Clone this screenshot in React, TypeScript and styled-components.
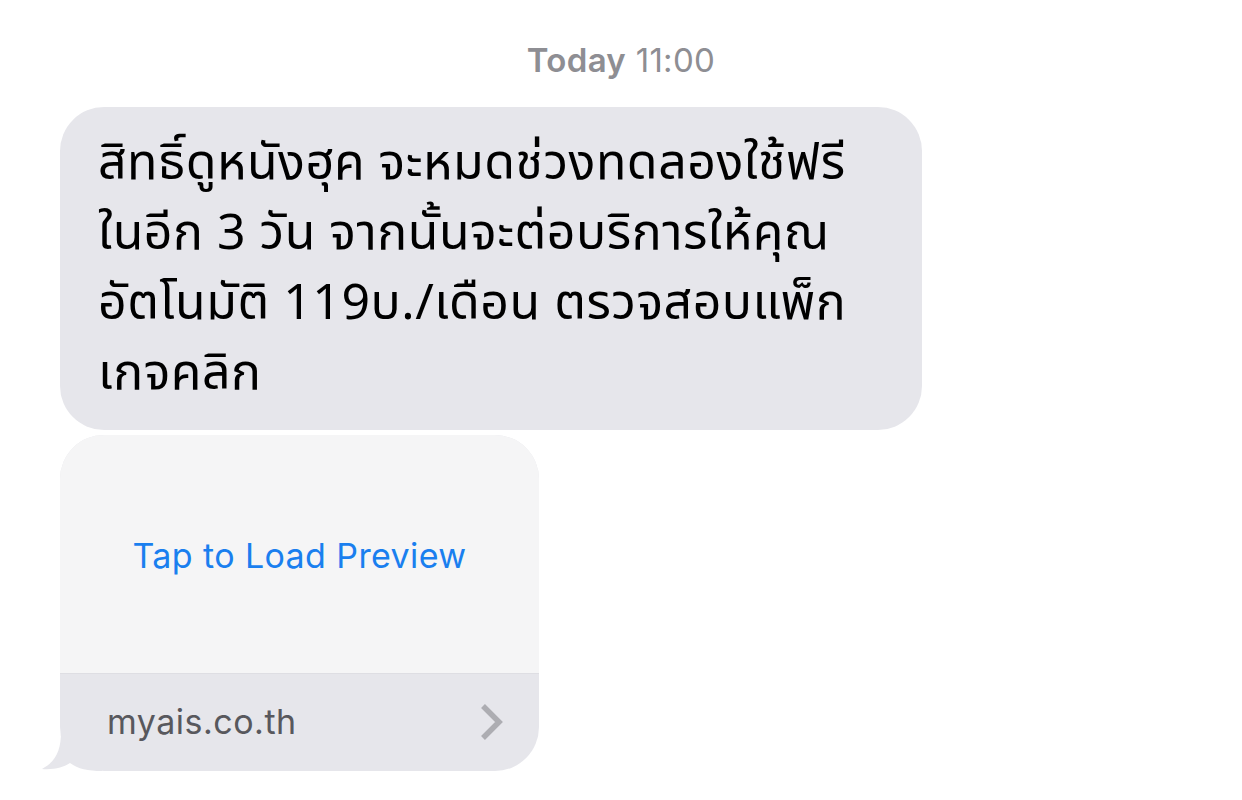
import React from "react";
import styled, { createGlobalStyle } from "styled-components";

const Global = createGlobalStyle`
  html, body { margin: 0; padding: 0; background: #ffffff; }
  body { font-family: Inter, "Noto Sans", "DejaVu Sans", sans-serif; }
`;

const Page = styled.div`
  width: 1242px;
  height: 800px;
  display: flex;
  flex-direction: column;
  align-items: flex-start;
  overflow: hidden;
  box-sizing: border-box;
  padding: 40px 0 0 60px;
`;

const Stamp = styled.div`
  align-self: stretch;
  margin-left: -60px;
  text-align: center;
  font-size: 33px;
  line-height: 40px;
  color: #8e8e93;
  letter-spacing: 0.3px;
  b { font-weight: 600; }
  span { font-weight: 400; }
`;

const TextBubble = styled.div`
  margin-top: 27px;
  width: 862px;
  box-sizing: border-box;
  background: #e6e6eb;
  border-radius: 44px;
  padding: 22px 30px 21px 38px;
  font-family: "Noto Sans Thai", "Noto Sans", "DejaVu Sans", sans-serif;
  font-size: 50px;
  line-height: 70px;
  letter-spacing: 0.5px;
  color: #000000;
`;

const Line = styled.div`
  white-space: nowrap;
`;

const LinkBubble = styled.div`
  position: relative;
  margin-top: 5px;
  width: 479px;
  height: 336px;
  display: flex;
  flex-direction: column;
  border-radius: 44px;
  background: #e6e6eb;
`;

const Preview = styled.div`
  flex: 0 0 239px;
  display: flex;
  align-items: center;
  justify-content: center;
  background: #f5f5f6;
  border-radius: 44px 44px 0 0;
  border-bottom: 1px solid #dedee3;
  color: #1a7fef;
  font-size: 34px;
  letter-spacing: 0.4px;
  padding-top: 2px;
  box-sizing: border-box;
`;

const Footer = styled.div`
  flex: 1;
  display: flex;
  align-items: center;
  justify-content: space-between;
  padding: 0 35px 2px 47px;
  color: #58585d;
  font-size: 34px;
  letter-spacing: 0.5px;
  position: relative;
  z-index: 1;
`;

const Tail = styled.svg`
  position: absolute;
  left: -18px;
  bottom: 0;
  width: 60px;
  height: 40px;
  z-index: 0;
`;

export default function App() {
  return (
    <>
      <Global />
      <Page>
        <Stamp>
          <b>Today</b> <span>11:00</span>
        </Stamp>
        <TextBubble>
          <Line>สิทธิ์ดูหนังฮุค จะหมดช่วงทดลองใช้ฟรี</Line>
          <Line>ในอีก 3 วัน จากนั้นจะต่อบริการให้คุณ</Line>
          <Line>อัตโนมัติ 119บ./เดือน ตรวจสอบแพ็ก</Line>
          <Line>เกจคลิก</Line>
        </TextBubble>
        <LinkBubble>
          <Tail viewBox="0 0 60 40">
            <path
              d="M19 0 C19 20 14 30 0 38 C12 39 22 36 28 32 C36 38 46 40 60 40 L60 0 Z"
              fill="#e6e6eb"
            />
          </Tail>
          <Preview>Tap to Load Preview</Preview>
          <Footer>
            <span>myais.co.th</span>
            <svg width="26" height="40" viewBox="0 0 26 40">
              <path
                d="M5 4 L21 20 L5 36"
                fill="none"
                stroke="#adadb2"
                strokeWidth="5.5"
                strokeLinecap="butt"
                strokeLinejoin="miter"
              />
            </svg>
          </Footer>
        </LinkBubble>
      </Page>
    </>
  );
}
